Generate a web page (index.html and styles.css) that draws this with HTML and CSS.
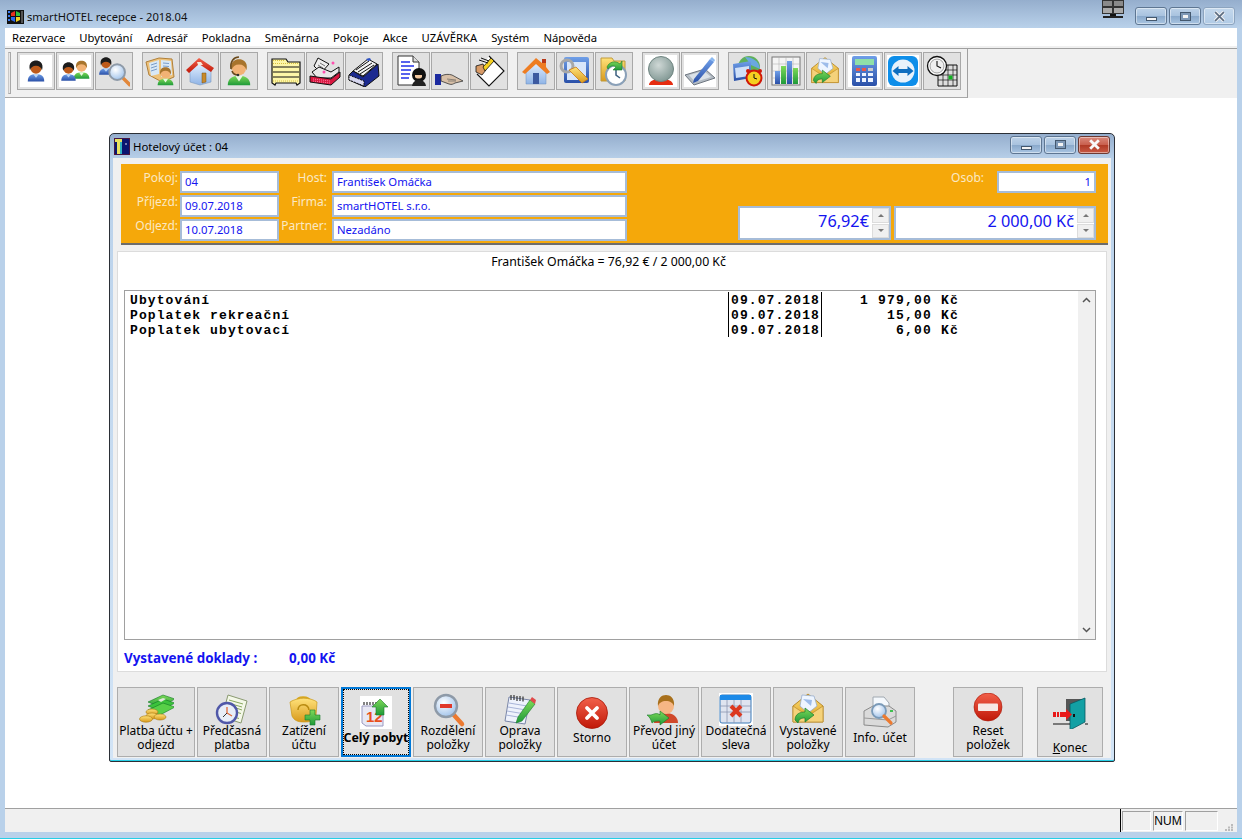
FILE: index.html
```html
<!DOCTYPE html>
<html lang="cs">
<head>
<meta charset="utf-8">
<title>smartHOTEL recepce</title>
<link rel="stylesheet" href="styles.css">
</head>
<body>
<svg class="defs" aria-hidden="true">
<defs>
<linearGradient id="gBlue" x1="0" y1="0" x2="0" y2="1"><stop offset="0" stop-color="#6f9fe8"/><stop offset="1" stop-color="#2a50a8"/></linearGradient>
<linearGradient id="gGreen" x1="0" y1="0" x2="0" y2="1"><stop offset="0" stop-color="#7ed957"/><stop offset="1" stop-color="#1f9a3a"/></linearGradient>
<linearGradient id="gGold" x1="0" y1="0" x2="0" y2="1"><stop offset="0" stop-color="#ffe27a"/><stop offset="1" stop-color="#d99a1c"/></linearGradient>
<linearGradient id="gRed" x1="0" y1="0" x2="0" y2="1"><stop offset="0" stop-color="#f2604a"/><stop offset="1" stop-color="#c01808"/></linearGradient>
<linearGradient id="gSky" x1="0" y1="0" x2="0" y2="1"><stop offset="0" stop-color="#e4f0ff"/><stop offset="1" stop-color="#8fb4e6"/></linearGradient>
<radialGradient id="gGlass" cx=".4" cy=".35" r=".7"><stop offset="0" stop-color="#ffffff"/><stop offset="1" stop-color="#9cc0ea"/></radialGradient>
<radialGradient id="gBall" cx=".4" cy=".35" r=".7"><stop offset="0" stop-color="#cfd8d6"/><stop offset="1" stop-color="#7f9692"/></radialGradient>
<symbol id="pDark" viewBox="0 0 32 32">
<path d="M5 30c0-7 4-10 11-10s11 3 11 10z" fill="url(#gBlue)"/><path d="M12 20l4 5 4-5z" fill="#bcd6f4"/>
<circle cx="16" cy="12" r="7.500" fill="#bd5a1a"/><path d="M8 15C5 5 12 2 16 2S27 5 24 15c-1-4-4-6-8-6s-7 2-8 6z" fill="#1c1c1c"/>
</symbol>
<symbol id="pGreen" viewBox="0 0 32 32">
<path d="M4 30c0-7 5-10 12-10s12 3 12 10z" fill="url(#gGreen)"/><path d="M12 20l4 6 4-6z" fill="#e8f8e0"/>
<circle cx="16" cy="12" r="7.500" fill="#f2b274"/><path d="M8 14C6 5 12 2.500 16 2.500S26 5 24 14c-1-4-4-6-8-6s-7 2-8 6z" fill="#a8742c"/>
</symbol>
<symbol id="mag" viewBox="0 0 32 32">
<path d="M20 20l9 9" stroke="#e2873a" stroke-width="4.500" stroke-linecap="round"/>
<circle cx="13" cy="13" r="10" fill="url(#gGlass)" stroke="#8e9aa8" stroke-width="2.500"/>
</symbol>
<symbol id="envArrow" viewBox="0 0 36 36">
<path d="M3 16L18 4l15 12v16H3z" fill="url(#gGold)" stroke="#b98a2a"/>
<path d="M10 16l2-11 12 1 3 10-9 7z" fill="#eef5ff" stroke="#8fa8cc" stroke-width=".7"/><path d="M13 9l9 1-1 6z" fill="#9dbcea"/>
<path d="M3 16l15 10 15-10v16H3z" fill="#f5d27a" stroke="#b98a2a" stroke-width=".7"/>
<path d="M7 27c0-6 5-8 10-8v-4l9 7-9 7v-4c-4 0-6 1-7 5z" fill="url(#gGreen)" stroke="#1c7a2c" stroke-width=".7" transform="translate(-2 3)"/>
</symbol>
</defs>
</svg>

<div class="app">
  <header class="titlebar">
    <svg class="appicon" viewBox="0 0 17 14"><rect width="17" height="14" fill="#111"/><path d="M1 1h2v2H1zM1 5h2v2H1zM1 9h2v2H1z" fill="#3a7af0"/><path d="M4 3l4-2v5H4z" fill="#e8301c"/><path d="M9 1l4 2v3H9z" fill="#30c040"/><path d="M4 7h4v5l-4-2z" fill="#2a66e8"/><path d="M9 7h4v3l-4 2z" fill="#f0d020"/><path d="M14 1h2v12h-2z" fill="#555"/></svg>
    <span class="title-text">smartHOTEL recepce - 2018.04</span>
    <svg class="monitor" viewBox="0 0 22 18"><rect width="22" height="14" fill="#333"/><path d="M1 1h9v5H1zM12 1h9v5h-9z" fill="#8a8a8a"/><path d="M1 8h9v5H1zM12 8h9v5h-9z" fill="#aaa"/><path d="M8 14h6v2H8z" fill="#111"/><path d="M1 16h20v2H1z" fill="#222"/></svg>
    <div class="caption-btns">
      <span class="capbtn"><i class="glyph-min"></i></span>
      <span class="capbtn"><i class="glyph-max"></i></span>
      <span class="capbtn capbtn-x"><svg class="glyph-x" viewBox="0 0 12 10"><path d="M2 1l8 8M10 1L2 9" stroke="#f2f2f2" stroke-width="3.400"/><path d="M2 1l8 8M10 1L2 9" stroke="#5c6c80" stroke-width="1.500"/></svg></span>
    </div>
  </header>

  <div class="client">
    <nav class="menu">
      <span>Rezervace</span><span>Ubytování</span><span>Adresář</span><span>Pokladna</span><span>Směnárna</span><span>Pokoje</span><span>Akce</span><span>UZÁVĚRKA</span><span>Systém</span><span>Nápověda</span>
    </nav>

    <div class="toolstrip">
      <div class="toolbar">
        <span class="grip"></span>
        <div class="tb-group">
          <button class="tb tb-white"><svg class="ic" viewBox="0 0 32 32"><use href="#pDark" x="4" y="4" width="24" height="24"/></svg></button>
          <button class="tb tb-white"><svg class="ic" viewBox="0 0 32 32"><use href="#pGreen" x="12" y="3" width="21" height="23"/><use href="#pDark" x="-1" y="5" width="21" height="23"/></svg></button>
          <button class="tb"><svg class="ic" viewBox="0 0 32 32"><use href="#pDark" x="-2" y="0" width="20" height="22"/><use href="#mag" x="9" y="7" width="25" height="25"/></svg></button>
        </div>
        <div class="tb-group">
          <button class="tb"><svg class="ic" viewBox="0 0 32 32"><path d="M1 7l13-4 13 1 2 18-12 5-13-7z" fill="#eec27a" stroke="#b0803a"/><path d="M4 8l10-3v14L6 21zM16 5l10 1 1 14-11 2z" fill="#d8e8f6"/><path d="M6 10l6-2M6 13l6-2M6 16l6-2M18 8l6 .5M18 11l6 .5" stroke="#7a9cc8"/><use href="#pGreen" x="10" y="10" width="21" height="22"/></svg></button>
          <button class="tb"><svg class="ic" viewBox="0 0 32 32"><path d="M6 15l10-7 11 7v12l-11 3-10-3z" fill="url(#gSky)" stroke="#7a98c0" stroke-width=".6"/><path d="M2 15L15 3l15 10-3 4L15 9 5 18z" fill="url(#gRed)"/><path d="M13 7l4 0 2 3-5 0z" fill="#f8e8d8"/><path d="M18 18h4v9l-4 1z" fill="#c88a2c" stroke="#7a5010" stroke-width=".5"/></svg></button>
          <button class="tb"><svg class="ic" viewBox="0 0 32 32"><use href="#pGreen" x="0" y="2" width="32" height="30"/><path d="M8 14C7 6 11 2 16 2M9 16c1 3 3 4 6 4" fill="none" stroke="#6a4a1c" stroke-width="1.600"/><circle cx="15" cy="20" r="1.300" fill="#333"/></svg></button>
        </div>
        <div class="tb-group">
          <button class="tb"><svg class="ic" viewBox="0 0 32 32"><path d="M2 4h14l2 3h12v21l-3 2-1-2H6l-1 2-3-2z" fill="#fdf6a8" stroke="#111" stroke-width="1.200"/><path d="M3 12h26M3 17h26M3 22h26" stroke="#111"/><path d="M3 5.500h12M3 8.500h26M3 26h26" stroke="#d8c040" stroke-dasharray="1 1"/></svg></button>
          <button class="tb"><svg class="ic" viewBox="0 0 32 32"><path d="M9 3l11 6-8 9-7-7z" fill="#eee" stroke="#111"/><path d="M11 8l5 3M9 10l5 3" stroke="#777"/><path d="M3 17l7-5 12 5 8-5v5l-8 6-14 0z" fill="#e8e8e8" stroke="#111"/><path d="M1 21l21 3 9-7v5l-9 8-21-3z" fill="#d81840" stroke="#111"/><path d="M4 24l17 2M4 26l17 2" stroke="#ff7aa0" stroke-dasharray="1 1"/><circle cx="24" cy="8" r="1.500" fill="#ff50b0"/><circle cx="15" cy="17" r="1.500" fill="#ff50b0"/></svg></button>
          <button class="tb"><svg class="ic" viewBox="0 0 32 32"><path d="M5 16L20 4l9 5-14 12z" fill="#f4f4f4" stroke="#111"/><path d="M8 15L21 6M10 17L24 8M12 19L26 10" stroke="#111"/><path d="M18 4l4-1 1 2-3 1z" fill="#2a50c8"/><path d="M1 20l4-4 10 6 15-13 1 12-14 11-16-7z" fill="#1c2a90" stroke="#111"/><path d="M1 20l15 6v5L1 25z" fill="#d8d8f0" stroke="#111" stroke-dasharray="2 1"/></svg></button>
        </div>
        <div class="tb-group">
          <button class="tb"><svg class="ic" viewBox="0 0 32 32"><path d="M3 1h15l6 6v23H3z" fill="#fff" stroke="#333"/><path d="M18 1v6h6" fill="#ddd" stroke="#333"/><path d="M6 7h9M6 11h13M6 15h10M6 19h9M6 23h8" stroke="#2030e8" stroke-width="1.500"/><circle cx="24" cy="20" r="7" fill="#111"/><path d="M17 31c1-5 4-6 7-6s6 1 7 6z" fill="#222"/><path d="M20 22c1 2 6 2 7 0v-2h-7z" fill="#f2c8a0"/></svg></button>
          <button class="tb"><svg class="ic" viewBox="0 0 32 32"><path d="M1 19h6v11H1z" fill="#1c2aa0"/><path d="M7 21c4-2 8-2 11-1l11 6-8 2c-2 1-3 2-6 1l-8-3z" fill="#d8c0a8" stroke="#333" stroke-width=".8"/><path d="M13 24l9 1M14 26l8 0" stroke="#555" stroke-width=".6"/></svg></button>
          <button class="tb"><svg class="ic" viewBox="0 0 32 32"><path d="M16 1l15 15-15 15L4 19" fill="#fff" stroke="#111" stroke-width="1.100"/><path d="M3 11l7-2 3 6-4 5-6-3z" fill="#d89a66" stroke="#111" stroke-width=".8"/><path d="M10 12l8-9 3 3-9 10z" fill="#f5d020" stroke="#111" stroke-width=".8"/><path d="M6 5l9 3M8 3l8 3" stroke="#111"/></svg></button>
        </div>
        <div class="tb-group">
          <button class="tb"><svg class="ic" viewBox="0 0 32 32"><path d="M6 15l10-8 10 8v14H6z" fill="url(#gSky)" stroke="#6a8cbc" stroke-width=".5"/><path d="M2 17L16 3l6 5V4h4v8l4 5-3 2L16 9 5 19z" fill="#ee7d22"/><path d="M22 4h4v4l-4 0z" fill="#b83818"/><path d="M13 18h6v11h-6z" fill="#3c5aa0"/></svg></button>
          <button class="tb"><svg class="ic" viewBox="0 0 32 32"><rect x="5" y="2" width="25" height="26" rx="2" fill="url(#gBlue)"/><rect x="8" y="7" width="19" height="18" fill="#d8e6fa"/><circle cx="8" cy="11" r="6" fill="none" stroke="#a8a8a8" stroke-width="3"/><path d="M10 15l13 13 6-4-12-12z" fill="url(#gGold)" stroke="#c87818" stroke-width=".8"/></svg></button>
          <button class="tb"><svg class="ic" viewBox="0 0 32 32"><path d="M3 3h11l2 3h11v20H3z" fill="url(#gGold)" stroke="#c09a3a"/><circle cx="18" cy="20" r="10" fill="#fff" stroke="#8aa0b8" stroke-width="2"/><path d="M18 14v6l4 3" stroke="#3c6080" stroke-width="1.500" fill="none"/><path d="M9 12c2-5 8-7 13-3l2-3v9h-9l3-3c-3-2-6-1-8 2z" fill="url(#gGreen)" stroke="#1c7a2c" stroke-width=".6"/></svg></button>
        </div>
        <div class="tb-group">
          <button class="tb tb-white"><svg class="ic" viewBox="0 0 32 32"><path d="M4 30c0-4 5-6 12-6s12 2 12 6z" fill="#e62c10"/><circle cx="16" cy="14" r="12.500" fill="url(#gBall)" stroke="#6e8480"/></svg></button>
          <button class="tb tb-white"><svg class="ic" viewBox="0 0 32 32"><path d="M1 20l20-6 10 9-21 7z" fill="#b4bcc4" stroke="#6e7680"/><path d="M5 20l15-4 7 6-16 5z" fill="#dbe2e8"/><path d="M10 24L26 4l4 3-16 19-5 2z" fill="url(#gBlue)"/><path d="M26 4l2-2 3 3-1 2z" fill="#8ab8f0"/></svg></button>
        </div>
        <div class="tb-group">
          <button class="tb"><svg class="ic" viewBox="0 0 32 32"><circle cx="18" cy="12" r="11" fill="#5fb05a"/><path d="M14 2c6 0 14 3 15 12l-9-4z" fill="#6aa8e0"/><path d="M2 9l18-3v17L3 26z" fill="url(#gBlue)"/><path d="M4 13l14-2v10L5 23z" fill="#cfe0f8"/><circle cx="23" cy="23" r="7.500" fill="#f5d020" stroke="#d01808" stroke-width="2"/><path d="M23 19v4l3 1" stroke="#111" fill="none"/><circle cx="17" cy="16" r="2" fill="#d01808"/><circle cx="29" cy="16" r="2" fill="#d01808"/></svg></button>
          <button class="tb"><svg class="ic" viewBox="0 0 32 32"><rect x="2" y="2" width="28" height="28" fill="#f4f4f4" stroke="#777"/><path d="M2 9h28M2 16h28M2 23h28M9 2v28M16 2v28M23 2v28" stroke="#aaa" stroke-width=".5"/><rect x="5" y="16" width="5" height="13" fill="url(#gBlue)"/><rect x="11" y="11" width="5" height="18" fill="url(#gGreen)"/><rect x="17" y="6" width="5" height="23" fill="url(#gBlue)"/><rect x="23" y="13" width="5" height="16" fill="url(#gGreen)"/></svg></button>
          <button class="tb"><svg class="ic" viewBox="0 1 36 36"><use href="#envArrow" width="36" height="36"/></svg></button>
          <button class="tb tb-white"><svg class="ic" viewBox="0 0 32 32"><rect x="4" y="1" width="25" height="30" rx="2" fill="url(#gBlue)"/><rect x="7" y="4" width="19" height="6" fill="#8fe0a8"/><path d="M8 13h4v3H8zM14 13h4v3h-4z" fill="#e8584a"/><path d="M20 13h5v3h-5z" fill="#ccc"/><path d="M8 18h4v3H8zM14 18h4v3h-4zM20 18h5v3h-5zM8 23h4v4H8zM14 23h4v4h-4zM20 23h5v4h-5z" fill="#eef4ff"/></svg></button>
          <button class="tb tb-white"><svg class="ic" viewBox="0 0 32 32"><rect x="1" y="1" width="30" height="30" rx="6" fill="#0e8ee9"/><circle cx="16" cy="16" r="11.500" fill="#e8f2fb"/><path d="M5.500 16l6-5v3h9v-3l6 5-6 5v-3h-9v3z" fill="#0e6ec0"/></svg></button>
          <button class="tb"><svg class="ic" viewBox="0 0 32 32"><path d="M12 10h19v21H12z" fill="#ddd" stroke="#111"/><path d="M12 15h19M12 20h19M12 25h19M17 10v21M22 10v21M27 10v21" stroke="#111" stroke-width=".7"/><rect x="22.500" y="20.500" width="4" height="4" fill="#10b020"/><circle cx="11" cy="11" r="9.500" fill="#fff" stroke="#111" stroke-width="1.300"/><circle cx="11" cy="11" r="7" fill="#eee" stroke="#666" stroke-width=".6"/><path d="M11 6v5l4 2" stroke="#111" fill="none" stroke-width="1.100"/></svg></button>
        </div>
      </div>
    </div>

    <main class="desktop">
      <section class="win">
        <div class="win-title">
          <svg class="winicon" viewBox="0 0 16 17"><rect width="16" height="17" fill="#0a1470" stroke="#801818"/><path d="M1 1h7v3H6v12H3V4H1z" fill="#e8e060"/><path d="M6 4h2v12H6z" fill="#30b0c0"/><circle cx="12" cy="6" r=".8" fill="#fff"/></svg>
          <span class="win-title-text">Hotelový účet : 04</span>
          <div class="caption-btns win-btns">
            <span class="capbtn"><i class="glyph-min"></i></span>
            <span class="capbtn"><i class="glyph-max"></i></span>
            <span class="capbtn capbtn-close"><svg class="glyph-x" viewBox="0 0 12 10"><path d="M2 1l8 8M10 1L2 9" stroke="#f8f8f8" stroke-width="2.600"/></svg></span>
          </div>
        </div>
        <div class="win-client">
          <div class="info">
            <div class="fieldcol col-a">
              <label>Pokoj:</label><span class="field">04</span>
              <label>Příjezd:</label><span class="field">09.07.2018</span>
              <label>Odjezd:</label><span class="field">10.07.2018</span>
            </div>
            <div class="fieldcol col-b">
              <label>Host:</label><span class="field">František Omáčka</span>
              <label>Firma:</label><span class="field">smartHOTEL s.r.o.</span>
              <label>Partner:</label><span class="field">Nezadáno</span>
            </div>
            <div class="totals">
              <div class="osob"><label>Osob:</label><span class="field field-num">1</span></div>
              <div class="moneyrow">
                <div class="money money-eur"><span class="money-val">76,92€</span><span class="spin"><b><i class="up"></i></b><b><i class="down"></i></b></span></div>
                <div class="money money-czk"><span class="money-val">2 000,00 Kč</span><span class="spin"><b><i class="up"></i></b><b><i class="down"></i></b></span></div>
              </div>
            </div>
          </div>

          <div class="sheet">
            <div class="sheet-caption">František Omáčka = 76,92 € / 2 000,00 Kč</div>
            <div class="list">
              <div class="rows">
                <div class="row"><span class="c-name">Ubytování</span><span class="c-date">09.07.2018</span><span class="c-amt">1 979,00 Kč</span></div>
                <div class="row"><span class="c-name">Poplatek rekreační</span><span class="c-date">09.07.2018</span><span class="c-amt">15,00 Kč</span></div>
                <div class="row"><span class="c-name">Poplatek ubytovací</span><span class="c-date">09.07.2018</span><span class="c-amt">6,00 Kč</span></div>
              </div>
              <div class="scroll">
                <svg class="chev" viewBox="0 0 9 6"><path d="M1 5l3.500-3.500L8 5" fill="none" stroke="#555" stroke-width="1.500"/></svg>
                <svg class="chev" viewBox="0 0 9 6"><path d="M1 1l3.500 3.500L8 1" fill="none" stroke="#555" stroke-width="1.500"/></svg>
              </div>
            </div>
            <div class="docs"><span class="docs-label">Vystavené doklady :</span><span>0,00 Kč</span></div>
          </div>

          <div class="actions">
            <button class="act act-wide"><svg class="aic" viewBox="0 0 36 36"><path d="M10 9l15-7 12 4-15 8z" fill="url(#gGreen)" stroke="#0f7a24" stroke-width=".6"/><path d="M10 13l15-7 12 4-15 8z" fill="#3cc23c" stroke="#0f7a24" stroke-width=".6"/><path d="M10 17l15-7 12 4-15 8z" fill="#58d048" stroke="#0f7a24" stroke-width=".6"/><path d="M20 7l5-2 3 1-5 3z" fill="#dfe8d8"/><ellipse cx="14" cy="19" rx="6" ry="3" fill="url(#gGold)" stroke="#a87810" stroke-width=".6"/><ellipse cx="14" cy="23" rx="6" ry="3" fill="url(#gGold)" stroke="#a87810" stroke-width=".6"/><ellipse cx="8" cy="26" rx="6.500" ry="3.200" fill="url(#gGold)" stroke="#a87810" stroke-width=".6"/><ellipse cx="22" cy="24" rx="6" ry="3" fill="url(#gGold)" stroke="#a87810" stroke-width=".6"/></svg><span class="act-label">Platba účtu +<br>odjezd</span></button>
            <button class="act"><svg class="aic" viewBox="0 0 36 36"><path d="M14 2l19 6-6 22-19-6z" fill="#f4f8e8" stroke="#8a9a70"/><path d="M15 7l14 4M14 10l14 4M22 15l6 2M22 19l5 1.500M20 24l5 1.500" stroke="#88a860"/><circle cx="13" cy="20" r="10" fill="#e8eef8" stroke="#5058a8" stroke-width="2.400"/><path d="M13 14v6l5 3" fill="none" stroke="#e06a3a" stroke-width="1.300"/><path d="M13 20l-4 4" stroke="#333"/></svg><span class="act-label">Předčasná<br>platba</span></button>
            <button class="act"><svg class="aic" viewBox="0 0 36 36"><path d="M11 8c0-5 12-5 13 0" fill="none" stroke="#d8a820" stroke-width="2"/><path d="M4 9c8-5 20-5 27 0l-1 14c-1 5-5 6-12 6-7 0-10-2-12-6z" fill="url(#gGold)" stroke="#c89818" stroke-width=".7"/><path d="M12 17c0-7 10-7 11 0" fill="none" stroke="#b88a10" stroke-width="1.500"/><path d="M24 17h5v5h5v5h-5v5h-5v-5h-5v-5h5z" fill="url(#gGreen)" stroke="#1a7a2c" stroke-width=".6"/></svg><span class="act-label">Zatížení<br>účtu</span></button>
            <button class="act act-focus"><svg class="aic" viewBox="0 -3 36 36"><rect x="2" y="0" width="32" height="33" fill="#fff"/><path d="M4 10h21v20H8l-4-3z" fill="#e8e8f4" stroke="#9a9ac0"/><path d="M6 9V6M9 9V6M12 9V6M15 9V6M18 9V6" stroke="#333" stroke-width="1.200"/><text class="cal-num" x="8" y="26">12</text><path d="M18 19v-8h-4l8-8 8 8h-4v8z" fill="url(#gGreen)" stroke="#1a7a2c" stroke-width=".6"/></svg><span class="act-label act-bold">Celý pobyt</span></button>
            <button class="act"><svg class="aic" viewBox="0 0 36 36"><path d="M23 21l9 10" stroke="#ec7a30" stroke-width="4.500" stroke-linecap="round"/><circle cx="16" cy="13" r="11" fill="url(#gGlass)" stroke="#8e9aa8" stroke-width="2.400"/><path d="M10 11h12v4H10z" fill="#e0382a"/></svg><span class="act-label">Rozdělení<br>položky</span></button>
            <button class="act"><svg class="aic" viewBox="0 0 36 36"><path d="M7 4l21 3-5 24-20-3z" fill="#eef2fc" stroke="#7a86a8"/><path d="M7 10l18 3M6 14l18 3M5 18l18 3M4 22l18 3" stroke="#a8b4d8"/><path d="M9 2v5M12 2v5M15 3v5M18 3v5M21 3.500v5" stroke="#333" stroke-width="1.200"/><path d="M16 24l12-17 5 4-13 17-6 2z" fill="url(#gGreen)" stroke="#1a7a2c" stroke-width=".6"/><path d="M28 7l2-3 4 3-1 4z" fill="#e04a4a"/></svg><span class="act-label">Oprava<br>položky</span></button>
            <button class="act"><svg class="aic" viewBox="0 0 36 36"><circle cx="18" cy="20" r="15.500" fill="url(#gRed)" stroke="#a81808" stroke-width=".8"/><path d="M13 15l10 10M23 15L13 25" stroke="#fff" stroke-width="3.800" stroke-linecap="round"/></svg><span class="act-label">Storno</span></button>
            <button class="act"><svg class="aic" viewBox="0 0 36 36"><path d="M8 30c0-6 5-10 12-10s12 4 12 10z" fill="#d0482a"/><circle cx="20" cy="13" r="8" fill="#f6b684"/><path d="M12 13c-1-8 4-11 8-11s9 3 8 11c-1-3-4-5-8-5s-7 2-8 5z" fill="#a8701c"/><path d="M1 22h4l3-1c3-1 5 0 6 1v-4l9 7-9 7v-4c-3 0-6 0-8 2-1-3-2-6-5-8z" fill="url(#gGreen)" stroke="#1a7a2c" stroke-width=".6"/></svg><span class="act-label">Převod jiný<br>účet</span></button>
            <button class="act"><svg class="aic" viewBox="0 2 36 36"><rect x="1" y="2" width="34" height="33" fill="#fff"/><rect x="2" y="4" width="31" height="28" rx="2" fill="#dfe4f0" stroke="#3a7ab8"/><rect x="2" y="4" width="31" height="5" fill="#1c8ae8"/><path d="M2 15h31M2 21h31M9 9v23M16 9v23M23 9v23" stroke="#8a94b0" stroke-width=".8"/><path d="M13 15l10 10M23 15L13 25" stroke="#dc3820" stroke-width="4"/></svg><span class="act-label">Dodatečná<br>sleva</span></button>
            <button class="act"><svg class="aic" viewBox="0 3 36 36"><use href="#envArrow" width="36" height="36"/></svg><span class="act-label">Vystavené<br>položky</span></button>
            <button class="act"><svg class="aic" viewBox="0 -1 36 36"><path d="M11 3h11l5 6v10H11z" fill="#f4f8fc" stroke="#a0a8b0"/><path d="M2 17l9-5h16l7 5v11l-8 5-24-2z" fill="#dadada" stroke="#8a8a8a"/><path d="M2 24l24 2 8-4" fill="none" stroke="#999"/><circle cx="17" cy="17" r="7" fill="url(#gGlass)" stroke="#7a9ab8" stroke-width="1.800"/><path d="M22 22l7 7" stroke="#ec7a30" stroke-width="3.200" stroke-linecap="round"/><rect x="28" y="16" width="3" height="2" fill="#40c050"/></svg><span class="act-label">Info. účet</span></button>
            <button class="act act-reset"><svg class="aic" viewBox="0 4 36 36"><circle cx="18" cy="18" r="14" fill="url(#gRed)" stroke="#a81808" stroke-width=".6"/><rect x="8" y="14.500" width="20" height="7.500" rx="1" fill="#f6e8e4"/></svg><span class="act-label">Reset<br>položek</span></button>
            <button class="act act-exit"><svg class="aic" viewBox="0 -3 36 36"><path d="M14 3h19v22H14z" fill="#555"/><path d="M18 8l15-6v24l-15 8z" fill="#12a0a4" stroke="#085860" stroke-width=".8"/><rect x="21" y="18" width="2" height="3" fill="#111"/><path d="M1 16h3v5H1zM5 16h2v5H5zM8 16h6v-3l6 5.500-6 5.500v-3H8z" fill="#e81818"/><path d="M1 28h17M33 28h3" stroke="#111" stroke-width="1.200"/></svg><span class="act-label act-exit-label"><u>K</u>onec</span></button>
          </div>
        </div>
      </section>
    </main>

    <footer class="status">
      <span class="status-fill"></span>
      <span class="spanel spanel-a"></span>
      <span class="spanel spanel-b">NUM</span>
      <span class="spanel spanel-c"></span>
      <svg class="sgrip" viewBox="0 0 8 7"><path d="M6 0h2v2H6zM3 2.500h2v2H3zM6 2.500h2v2H6zM0 5h2v2H0zM3 5h2v2H3zM6 5h2v2H6z" fill="#bbb"/></svg>
    </footer>
  </div>
</div>
</body>
</html>
```

FILE: styles.css
```css
* { box-sizing: border-box; }
html, body { margin: 0; padding: 0; height: 100%; overflow: hidden; }
body { font-family: "Noto Sans", Tahoma, sans-serif; font-size: 11.3px; color: #000; background: #b9d1ea; }
.defs { display: block; width: 0; height: 0; }
button { font: inherit; color: inherit; padding: 0; margin: 0; }
svg { display: block; }

.app { display: flex; flex-direction: column; height: 839px; width: 1242px; background: #b9d1ea; border-bottom: 1px solid #27cfe6; }

.titlebar { height: 28px; flex: none; display: flex; align-items: flex-start; background: linear-gradient(#95aecd, #b9d1ea); padding-left: 7px; }
.appicon { width: 17px; height: 14px; margin-top: 10px; }
.title-text { font-size: 11.2px; margin: 8px 0 0 3px; line-height: 17px; color: #111; }
.monitor { width: 22px; height: 18px; margin-left: auto; }
.caption-btns { display: flex; gap: 2px; margin: 7px 7px 0 11px; }
.capbtn { width: 32px; height: 18px; border: 1px solid #5e7692; border-radius: 3px; background: linear-gradient(#bdd2e8 0, #a9c3df 48%, #8aa9cb 52%, #a9c5e2 100%); display: flex; align-items: center; justify-content: center; box-shadow: inset 0 0 0 1px rgba(255,255,255,.45); }
.capbtn-x { border-color: #8ca4bf; background: linear-gradient(#c4d8ec, #b0cae5); }
.capbtn-close { background: linear-gradient(#d9897c 0, #c9604e 48%, #b03a26 52%, #c95a44 100%); border-color: #6e3a32; }
.glyph-min { display: block; width: 11px; height: 4px; margin-top: 6px; background: #f4f4f4; border: 1px solid #44586e; }
.glyph-max { display: block; width: 11px; height: 9px; background: #f4f4f4; border: 1px solid #44586e; box-shadow: inset 0 0 0 2px #7e98b6; }
.glyph-x { width: 13px; height: 11px; }

.client { flex: 1; display: flex; flex-direction: column; margin: 0 5px 6px; background: #fff; min-height: 0; }

.menu { height: 20px; flex: none; display: flex; background: #fff; border-bottom: 2px solid #f0f0f0; line-height: 19px; font-size: 11.25px; }
.menu span { padding: 0 7px; }

.toolstrip { flex: none; height: 50px; background: #f0f0f0; border-top: 1px solid #a0a0a0; }
.toolbar { width: 963px; height: 50px; display: flex; gap: 9px; padding: 3px 0 0 3px; border-right: 1px solid #a0a0a0; border-bottom: 2px solid #a8a8a8; }
.grip { width: 3px; height: 42px; margin-right: -3px; background: #e8e8e8; border: 1px solid #a8a8a8; border-left-color: #c8c8c8; }
.tb-group { display: flex; gap: 1px; }
.tb { width: 38px; height: 38px; border: 1px solid #a8a8a8; background: #e1e1e1; display: flex; align-items: center; justify-content: center; }
.tb-white { background: #fff; box-shadow: inset 0 0 0 2px #e1e1e1; }
.ic { width: 32px; height: 32px; }

.desktop { flex: 1; position: relative; background: #fff; min-height: 0; }
.win { position: absolute; left: 104px; top: 35px; width: 1006px; height: 629px; display: flex; flex-direction: column; padding: 0 3px 3px; border: 1px solid #2b2f36; border-radius: 5px 5px 2px 2px; background: linear-gradient(#95aecd 0, #b9d1ea 26px, #d2e4f6 100%); box-shadow: 0 0 0 1px rgba(255,255,255,.6), inset 0 -1px 0 #27cfe6; }
.win-title { height: 24px; flex: none; display: flex; align-items: center; padding-left: 1px; }
.winicon { width: 16px; height: 17px; }
.win-title-text { margin-left: 3px; font-size: 11.4px; }
.win-btns { margin: -3px 1px 0 auto; }

.win-client { flex: 1; min-height: 0; background: #f0f0f0; padding: 6px 4px 2px; display: flex; flex-direction: column; }

.info { height: 81px; flex: none; margin: 0 -1px 6px 4px; padding-top: 7px; background: #f5a80a; border-bottom: 2px solid #6c6c6c; display: flex; }
.fieldcol { display: grid; grid-auto-rows: 22px; row-gap: 2px; align-content: start; }
.col-a { grid-template-columns: 57px 99px; column-gap: 2px; }
.col-b { grid-template-columns: 48px 295px; column-gap: 5px; }
label { color: #fbe9c4; text-align: right; font-size: 12px; line-height: 14px; white-space: nowrap; }
.field { display: block; background: #fff; border: 2px solid #a6bcd8; color: #1414f0; padding-left: 3px; line-height: 18px; white-space: nowrap; }
.field-num { width: 99px; text-align: right; padding: 0 3px 0 0; }
.totals { flex: 1; display: flex; flex-direction: column; padding-right: 12px; }
.osob { display: flex; justify-content: flex-end; gap: 13px; height: 22px; }
.moneyrow { display: flex; justify-content: flex-end; gap: 3px; margin-top: 13px; }
.money { height: 34px; display: flex; background: #fff; border: 2px solid #a6bcd8; color: #1414f0; }
.money-eur { width: 153px; }
.money-czk { width: 202px; }
.money-val { flex: 1; text-align: right; font-size: 16.3px; line-height: 27px; padding-right: 3px; white-space: nowrap; }
.spin { width: 17px; display: flex; flex-direction: column; gap: 1px; background: #fff; }
.spin b { flex: 1; background: #f0f0f0; border: 1px solid #dcdcdc; display: flex; align-items: center; justify-content: center; }
.up, .down { display: block; width: 0; height: 0; border-left: 3px solid transparent; border-right: 3px solid transparent; }
.up { border-bottom: 3px solid #777; }
.down { border-top: 3px solid #777; }

.sheet { height: 421px; flex: none; background: #fff; border: 1px solid #dcdcdc; display: flex; flex-direction: column; padding: 0 10px 0 6px; }
.sheet-caption { height: 38px; text-align: center; font-size: 12.3px; line-height: 20px; padding-right: 3px; }
.list { height: 350px; flex: none; border: 1px solid #a0a0a0; display: flex; background: #fff; }
.rows { flex: 1; padding-top: 1px; font-family: "Liberation Mono", "Courier New", monospace; font-weight: 700; font-size: 13px; letter-spacing: 1.1px; }
.row { display: grid; grid-template-columns: 603px 94px 137px; grid-template-rows: 15px; height: 15px; line-height: 18px; white-space: pre; }
.c-name { padding-left: 5px; }
.c-date { border-left: 1px solid #000; border-right: 1px solid #000; padding-left: 2px; }
.c-amt { text-align: right; letter-spacing: 1.2px; }
.scroll { width: 17px; flex: none; background: #f0f0f0; display: flex; flex-direction: column; justify-content: space-between; align-items: center; padding: 6px 0; }
.chev { width: 9px; height: 6px; }
.docs { flex: 1; display: flex; padding-top: 11px; color: #1414f0; font-weight: 700; font-size: 13.4px; line-height: 15px; }
.docs-label { width: 165px; }

.actions { display: flex; gap: 2px; margin-top: 15px; }
.act { width: 70px; height: 70px; flex: none; display: flex; flex-direction: column; align-items: center; padding: 5px 0 5px; border: 1px solid #adadad; background: #e1e1e1; overflow: hidden; font-size: 12px; }
.act-wide { width: 78px; }
.aic { width: 36px; height: 36px; flex: none; margin-bottom: -5px; }
.act-label { flex: 1; display: flex; align-items: center; justify-content: center; text-align: center; line-height: 14px; white-space: nowrap; }
.act-bold { font-weight: 700; font-size: 12.4px; }
.act-focus { border: 2px solid #0078d7; padding: 4px 0 4px; outline: 1px dotted #000; outline-offset: -3px; }
.act-reset { margin-left: 36px; }
.act-exit { width: 66px; margin-left: 12px; padding-bottom: 1px; }
.act-exit-label { align-items: flex-end; }
.cal-num { font-family: "Liberation Sans", sans-serif; font-size: 15px; font-weight: 700; fill: #e8501c; }

.status { height: 24px; flex: none; display: flex; align-items: flex-start; background: #f0f0f0; border-top: 1px solid #a0a0a0; }
.status-fill { width: 1116px; height: 23px; border-right: 1px solid #000; }
.spanel { height: 20px; margin-top: 2px; border: 1px solid; border-color: #a0a0a0 #fff #fff #a0a0a0; line-height: 18px; text-align: center; }
.spanel-a { width: 29px; margin-left: 1px; }
.spanel-b { width: 30px; margin-left: 2px; font-family: "Liberation Sans", sans-serif; font-size: 12px; }
.spanel-c { width: 33px; margin-left: 2px; }
.sgrip { width: 8px; height: 7px; margin: 15px 0 0 7px; }
```
